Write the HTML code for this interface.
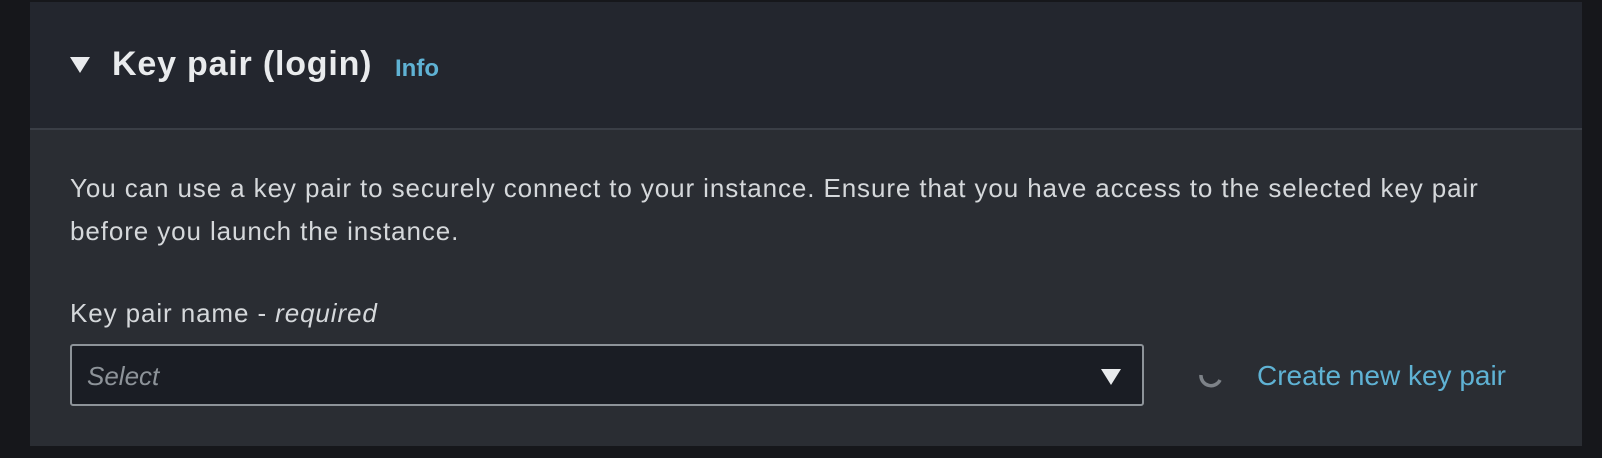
<!DOCTYPE html>
<html><head><style>
body{margin:0;width:1602px;height:458px;background:#16171b;font-family:"Liberation Sans",sans-serif;position:relative;overflow:hidden}
.panel{position:absolute;left:30px;top:2px;width:1552px;height:444px;background:#2a2d33}
.hdr{position:absolute;left:0;top:0;width:100%;height:126px;background:#23262e;border-bottom:2px solid #3a3e46}
.t{position:absolute;white-space:nowrap}
</style></head><body>
<div class="panel">
<div class="hdr"></div>
<svg class="t" style="left:39px;top:54px" width="22" height="18"><polygon points="1,1 21,1 11,17" fill="#e9ebed"/></svg>
<div class="t" style="left:82px;top:43px;font-size:34px;font-weight:bold;color:#e9ebed;letter-spacing:0.8px">Key pair (login)</div>
<div class="t" style="left:365px;top:53px;font-size:24px;font-weight:bold;color:#5fb2d4">Info</div>
<div class="t" style="left:40px;top:165px;font-size:26px;color:#d5d8db;line-height:43px;letter-spacing:0.9px">You can use a key pair to securely connect to your instance. Ensure that you have access to the selected key pair<br>before you launch the instance.</div>
<div class="t" style="left:40px;top:296px;font-size:26px;color:#d5d8db;letter-spacing:0.9px">Key pair name - <i>required</i></div>
<div class="t" style="left:40px;top:342px;width:1070px;height:58px;background:#1a1d24;border:2px solid #8d9399;border-radius:3px"></div>
<div class="t" style="left:57px;top:359px;font-size:26px;font-style:italic;color:#8d9399">Select</div>
<svg class="t" style="left:1070px;top:366px" width="22" height="18"><polygon points="1,1 21,1 11,17" fill="#e9ebed"/></svg>
<svg class="t" style="left:1166px;top:362px" width="30" height="30"><path d="M5,11 A10,10 0 0 0 24,16" stroke="#7d8288" stroke-width="3.5" fill="none"/></svg>
<div class="t" style="left:1227px;top:358px;font-size:28px;color:#5fb2d4">Create new key pair</div>
</div>
</body></html>
